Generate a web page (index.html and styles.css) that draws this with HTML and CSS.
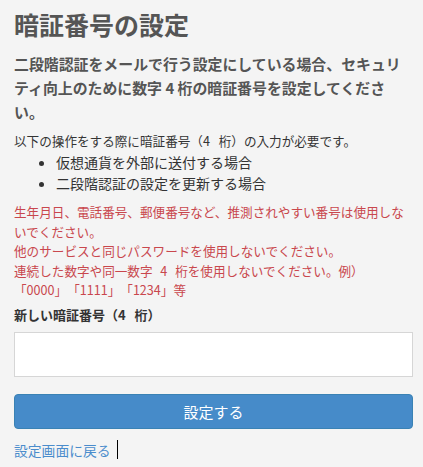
FILE: index.html
```html
<!DOCTYPE html>
<html lang="ja">
<head>
<meta charset="utf-8">
<link rel="stylesheet" href="styles.css">
</head>
<body>
<div class="page">
  <h1 class="title">暗証番号の設定</h1>
  <p class="lead">二段階認証をメールで行う設定にしている場合、セキュリティ向上のために数字 4 桁の暗証番号を設定してください。</p>
  <p class="note">以下の操作をする際に暗証番号（4 桁）の入力が必要です。</p>
  <ul class="cases">
    <li>仮想通貨を外部に送付する場合</li>
    <li>二段階認証の設定を更新する場合</li>
  </ul>
  <div class="warnings">
    <p>生年月日、電話番号、郵便番号など、推測されやすい番号は使用しないでください。</p>
    <p>他のサービスと同じパスワードを使用しないでください。</p>
    <p class="wide-space">連続した数字や同一数字 4 桁を使用しないでください。例）「0000」「1111」「1234」等</p>
  </div>
  <label class="label" for="pin">新しい暗証番号（4 桁）</label>
  <input class="field" id="pin" type="password">
  <button class="submit" type="button">設定する</button>
  <div class="back"><a href="#">設定画面に戻る</a><span class="caret"></span></div>
</div>
</body>
</html>
```
FILE: styles.css
```css
html, body {
  margin: 0;
  padding: 0;
  background: #f4f4f4;
}
body {
  font-family: "Noto Sans CJK JP", "Noto Sans", sans-serif;
  color: #333;
  text-spacing-trim: space-all;
}
.page {
  padding: 9px 10px 0 14px;
  display: flex;
  flex-direction: column;
}
.title {
  margin: 0;
  font-size: 25px;
  line-height: 30px;
  font-weight: bold;
  color: #555;
}
.lead {
  margin: 13px 0 0;
  font-size: 14.9px;
  line-height: 24px;
  font-weight: bold;
  color: #555;
}
.note {
  margin: 7px 0 0;
  font-size: 12.6px;
  line-height: 20px;
  word-spacing: 6px;
}
.cases {
  margin: 1px 0 0;
  padding-left: 42px;
  font-size: 14px;
  line-height: 20.5px;
}
.warnings {
  margin-top: 9px;
  color: #c9474d;
  font-size: 12.6px;
  line-height: 19.5px;
}
.warnings p {
  margin: 0;
}
.warnings .wide-space {
  word-spacing: 5px;
}
.label {
  margin-top: 5px;
  font-size: 13px;
  line-height: 20px;
  font-weight: bold;
  color: #333;
  word-spacing: 6px;
}
.field {
  margin: 7px 0 0;
  box-sizing: border-box;
  height: 45px;
  width: 100%;
  border: 1px solid #d6d6d6;
  background: #fff;
  outline: none;
}
.submit {
  margin-top: 17px;
  height: 35px;
  width: 100%;
  box-sizing: border-box;
  background: #468bc9;
  border: 1px solid #3a82b4;
  border-radius: 4px;
  color: #fff;
  font-family: inherit;
  font-size: 15px;
}
.back {
  margin-top: 11px;
  font-size: 13.8px;
  line-height: 20px;
  display: flex;
  align-items: center;
}
.back a {
  color: #4a8ccc;
  text-decoration: none;
}
.caret {
  display: inline-block;
  width: 1px;
  height: 19px;
  background: #000;
  margin-left: 6px;
}
```
